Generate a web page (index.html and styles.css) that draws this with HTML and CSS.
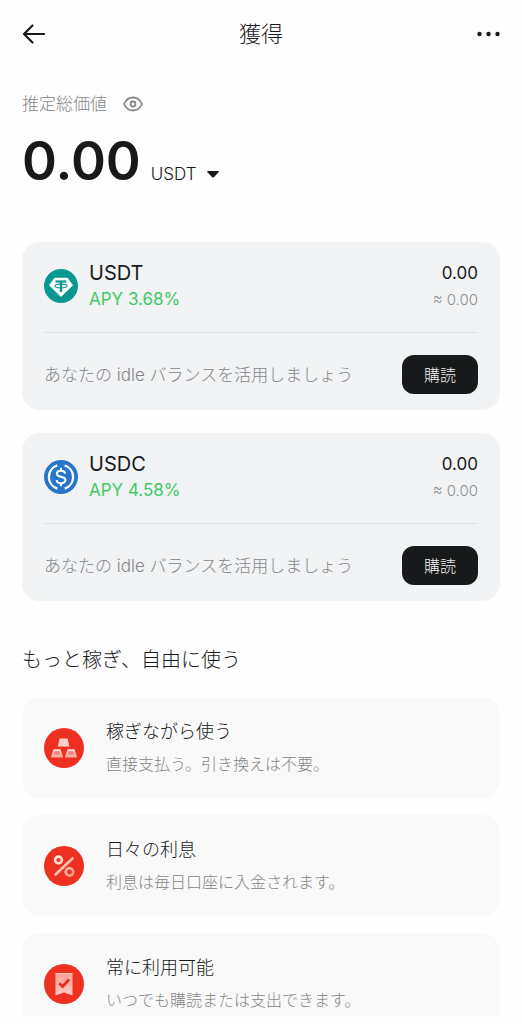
FILE: index.html
```html
<!DOCTYPE html>
<html lang="ja">
<head>
<meta charset="utf-8">
<meta name="viewport" content="width=device-width, initial-scale=1">
<title>獲得</title>
<link rel="stylesheet" href="styles.css">
</head>
<body>
<div class="screen">
  <header class="topbar">
    <button class="icon-button" type="button" aria-label="戻る">
      <svg width="24" height="24" viewBox="0 0 24 24" fill="none" stroke="currentColor" stroke-width="2.2" stroke-linecap="round" stroke-linejoin="round"><path d="M22 12H2M10.500 3.500L2 12l8.500 8.500"/></svg>
    </button>
    <h1 class="topbar-title">獲得</h1>
    <button class="icon-button" type="button" aria-label="メニュー">
      <svg width="24" height="24" viewBox="0 0 24 24" fill="currentColor"><circle cx="3.500" cy="12" r="2.200"/><circle cx="12.500" cy="12" r="2.200"/><circle cx="21.500" cy="12" r="2.200"/></svg>
    </button>
  </header>

  <main class="content">
    <section class="summary">
      <div class="summary-label">
        <span>推定総価値</span>
        <button class="icon-button eye" type="button" aria-label="残高の表示切替">
          <svg width="20" height="20" viewBox="0 0 20 20" fill="none" stroke="currentColor" stroke-width="1.800"><path d="M1 10C3 5.600 6.200 3.500 10 3.500S17 5.600 19 10C17 14.400 13.800 16.500 10 16.500S3 14.400 1 10Z"/><circle cx="10" cy="10" r="2.500"/></svg>
        </button>
      </div>
      <div class="summary-value">
        <span class="amount">0.00</span>
        <button class="currency" type="button">USDT
          <svg width="12" height="7" viewBox="0 0 12 7" fill="currentColor"><path d="M.8 0H11.200Q12.300.3 11.500 1.200L6.800 6.300Q6 7 5.200 6.300L.5 1.200Q-.3.3.8 0Z"/></svg>
        </button>
      </div>
    </section>

    <section class="assets">
      <article class="asset">
        <div class="asset-head">
          <svg class="coin" viewBox="0 0 34 34"><circle cx="17" cy="17" r="17" fill="#079890"/><path d="M10.500 8.800H23.500L29 16.300 17 28 5 16.300Z" fill="#fff"/><g fill="none" stroke="#079890"><path d="M11.500 12.500H22.500" stroke-width="2.200"/><path d="M17 12.500V23" stroke-width="2.400"/><ellipse cx="17" cy="17" rx="6" ry="1.900" stroke-width="1.100"/></g></svg>
          <div class="asset-name"><h2>USDT</h2><p class="apy">APY 3.68%</p></div>
          <div class="asset-balance"><p class="balance">0.00</p><p class="fiat">≈ 0.00</p></div>
        </div>
        <div class="asset-foot">
          <p>あなたの idle バランスを活用しましょう</p>
          <button class="subscribe" type="button">購読</button>
        </div>
      </article>
      <article class="asset">
        <div class="asset-head">
          <svg class="coin" viewBox="0 0 34 34"><circle cx="17" cy="17" r="17" fill="#2775ca"/><g fill="none" stroke="#fff"><path d="M13.300 5.400A12.200 12.200 0 0 0 13.300 28.600M20.700 5.400A12.200 12.200 0 0 1 20.700 28.600" stroke-width="2.300"/><path d="M21.200 13.600C20.800 11.600 19.400 10.700 17 10.700C14.500 10.700 12.900 11.900 12.900 13.700C12.900 15.700 14.500 16.300 17 16.800C19.700 17.300 21.400 18 21.400 20.100C21.400 22 19.600 23.200 17 23.200C14.400 23.200 12.900 22.100 12.600 20.100M17 7.800V11M17 23V26.200" stroke-width="2.100"/></g></svg>
          <div class="asset-name"><h2>USDC</h2><p class="apy">APY 4.58%</p></div>
          <div class="asset-balance"><p class="balance">0.00</p><p class="fiat">≈ 0.00</p></div>
        </div>
        <div class="asset-foot">
          <p>あなたの idle バランスを活用しましょう</p>
          <button class="subscribe" type="button">購読</button>
        </div>
      </article>
    </section>

    <section class="benefits">
      <h2 class="section-title">もっと稼ぎ、自由に使う</h2>
      <article class="benefit">
        <svg class="badge" viewBox="0 0 40 40"><defs><linearGradient id="bar" x1="0" y1="0" x2="0" y2="1"><stop offset="0" stop-color="#ffe3dd"/><stop offset="1" stop-color="#ff9d91"/></linearGradient></defs><circle cx="20" cy="20" r="20" fill="#ed3020"/><path d="M15.500 10.500H23.500L25.500 18.500H13.800Z" fill="#ffd0c9"/><g fill="url(#bar)" stroke="#ffc2b9" stroke-width=".8"><path d="M9.700 21.500H16.300L18.500 29H7.500Z"/><path d="M23.700 21.500H30.300L32.500 29H21.500Z"/></g><path d="M10.800 23.300H15.200L16 26.500H10ZM24.800 23.300H29.200L30 26.500H24Z" fill="#f77b6e"/></svg>
        <div><h3>稼ぎながら使う</h3><p>直接支払う。引き換えは不要。</p></div>
      </article>
      <article class="benefit">
        <svg class="badge" viewBox="0 0 40 40"><defs><linearGradient id="percent" gradientUnits="userSpaceOnUse" x1="10" y1="12" x2="30" y2="28"><stop offset="0" stop-color="#fff0e8"/><stop offset="1" stop-color="#ff9788"/></linearGradient></defs><circle cx="20" cy="20" r="20" fill="#ed3020"/><g fill="none" stroke="url(#percent)" stroke-width="2.600"><circle cx="14.500" cy="14" r="3.400"/><circle cx="25.500" cy="26" r="3.700"/><path d="M28.500 12.500L11.500 28.500" stroke-linecap="round"/></g></svg>
        <div><h3>日々の利息</h3><p>利息は毎日口座に入金されます。</p></div>
      </article>
      <article class="benefit">
        <svg class="badge" viewBox="0 0 40 40"><defs><linearGradient id="ribbon" x1="0" y1="0" x2="0" y2="1"><stop offset="0" stop-color="#ff9f95"/><stop offset="1" stop-color="#ffc9c2"/></linearGradient></defs><circle cx="20" cy="20" r="20" fill="#ed3020"/><path d="M11.500 9.500H28.500V31.500L20 28.500 11.500 31.500Z" fill="url(#ribbon)"/><path d="M11.500 9.500H28.500" stroke="#ffd8d2" stroke-width="1"/><path d="M15.200 19.200L18.700 22.500 25 15.500" fill="none" stroke="#e62d20" stroke-width="2.800"/></svg>
        <div><h3>常に利用可能</h3><p>いつでも購読または支出できます。</p></div>
      </article>
    </section>
  </main>
</div>
</body>
</html>
```

FILE: styles.css
```css
* { box-sizing: border-box; }

body {
  margin: 0;
  background: #fefefe;
  color: #18191a;
  font-family: Inter, "Noto Sans CJK JP", sans-serif;
  font-weight: 300;
}

h1, h2, h3, p { margin: 0; font-weight: inherit; }

button {
  border: 0;
  padding: 0;
  background: none;
  color: inherit;
  font: inherit;
  cursor: pointer;
}

svg { display: block; flex: none; }

.screen {
  height: calc(100vh - 8px);
  overflow-y: auto;
  scrollbar-width: none;
}

.topbar {
  display: flex;
  align-items: center;
  justify-content: space-between;
  height: 68px;
  padding: 0 22px;
}

.topbar-title { font-size: 22px; line-height: 34px; }

.content { padding: 24px 22px 0; }

.summary-label {
  display: flex;
  align-items: center;
  gap: 16px;
  color: #858688;
  font-size: 17px;
  line-height: 24px;
}

.summary-value {
  display: flex;
  align-items: baseline;
  gap: 10px;
  line-height: 64px;
  margin-top: 13px;
}

.amount { font-size: 53px; font-weight: 600; }

.currency {
  display: flex;
  align-items: center;
  gap: 10px;
  font-size: 17px;
  line-height: 24px;
}

.assets {
  display: grid;
  gap: 23px;
  margin-top: 49px;
}

.asset {
  padding: 0 22px;
  border-radius: 18px;
  background: #f1f3f4;
}

.asset-head {
  display: flex;
  align-items: center;
  gap: 11px;
  padding: 17px 0 20px;
  border-bottom: 1px solid #dfe1e3;
}

.coin { width: 34px; height: 34px; }

.asset-name { flex: 1; }

.asset-name h2 { font-size: 20px; line-height: 28px; font-weight: 400; }

.apy { color: #42c969; font-size: 17px; line-height: 25px; font-weight: 400; }

.asset-balance { text-align: right; }

.balance { font-size: 17px; line-height: 29px; font-weight: 400; }

.fiat { color: #8d8e90; font-size: 15px; line-height: 24px; }

.asset-foot {
  display: flex;
  align-items: center;
  justify-content: space-between;
  gap: 12px;
  padding: 22px 0 16px;
  color: #858688;
  font-size: 17px;
  line-height: 24px;
}

.subscribe {
  flex: none;
  padding: 8px 22px 7px;
  border-radius: 12px;
  background: #18191a;
  color: #f1f3f4;
  font-size: 16px;
  line-height: 24px;
}

.benefits {
  display: grid;
  gap: 17px;
  margin-top: 44px;
}

.section-title { margin-bottom: 5px; font-size: 20px; line-height: 30px; }

.benefit {
  display: flex;
  align-items: center;
  gap: 22px;
  padding: 18px 22px 17px;
  border-radius: 18px;
  background: #f9f9f9;
}

.badge { width: 40px; height: 40px; }

.benefit h3 { font-size: 18px; line-height: 33px; }

.benefit p { color: #858688; font-size: 16px; line-height: 33px; }
```
